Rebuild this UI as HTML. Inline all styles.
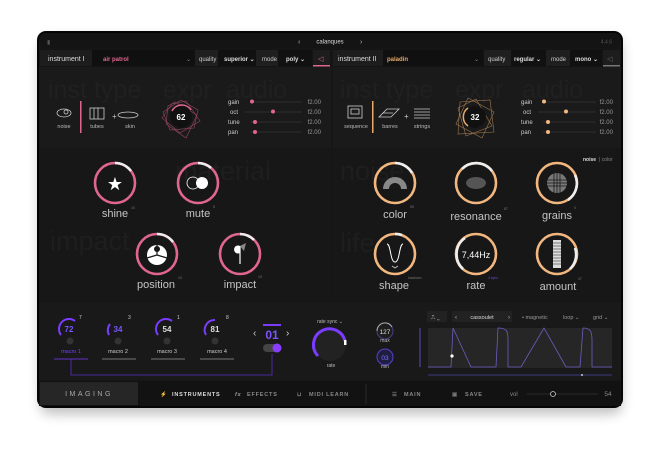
<!DOCTYPE html>
<html><head><meta charset="utf-8"><style>
html,body{margin:0;padding:0;background:#fff;width:660px;height:450px;overflow:hidden}
svg{display:block;font-family:"Liberation Sans",sans-serif}
</style></head><body>
<svg width="660" height="450" viewBox="0 0 660 450" xmlns="http://www.w3.org/2000/svg">
<defs>
<filter id="sh" x="-10%" y="-10%" width="120%" height="130%"><feGaussianBlur stdDeviation="6"/></filter>
</defs>
<rect x="40" y="38" width="582" height="376" rx="10" fill="#000" opacity="0.25" filter="url(#sh)"/>
<rect x="37" y="31" width="586" height="377" rx="9" fill="#050505"/>
<rect x="39" y="33" width="582" height="373" rx="7" fill="#161616"/>
<rect x="39" y="33" width="582" height="15" rx="7" fill="#141414"/>
<text x="47" y="44" font-size="6" fill="#555">▮</text>
<text x="298" y="44" font-size="7" fill="#bbb">‹</text>
<text x="330" y="43.5" font-size="6" fill="#ddd" text-anchor="middle">calanques</text>
<text x="360" y="44" font-size="7" fill="#bbb">›</text>
<text x="612" y="43.5" font-size="5" fill="#555" text-anchor="end">4.4.6</text>
<rect x="39" y="49" width="292" height="18" fill="#141414"/>
<rect x="333" y="49" width="288" height="18" fill="#141414"/>
<rect x="40" y="50" width="52" height="16" fill="#1d1d1d"/>
<text x="48" y="61" font-size="7" fill="#ddd">instrument I</text>
<rect x="92" y="50" width="103" height="16" fill="#101010"/>
<text x="103" y="61" font-size="6" font-weight="bold" fill="#e0668f">air patrol</text>
<text x="186" y="61" font-size="6" fill="#888">⌄</text>
<rect x="195" y="50" width="23" height="16" fill="#1f1f1f"/>
<text x="199" y="61" font-size="6" fill="#ccc">quality</text>
<rect x="218" y="50" width="38" height="16" fill="#111"/>
<text x="224" y="61" font-size="6" font-weight="bold" fill="#ddd">superior ⌄</text>
<rect x="256" y="50" width="22" height="16" fill="#1f1f1f"/>
<text x="262" y="61" font-size="6" fill="#ccc">mode</text>
<rect x="278" y="50" width="34" height="16" fill="#111"/>
<text x="286" y="61" font-size="6" font-weight="bold" fill="#ddd">poly  ⌄</text>
<rect x="313" y="50" width="17" height="16" fill="#1d1d1d"/>
<text x="318" y="61" font-size="7" fill="#e0668f">◁</text>
<rect x="313" y="65" width="17" height="1.5" fill="#e0668f"/>

<rect x="333" y="50" width="50" height="16" fill="#1d1d1d"/>
<text x="338" y="61" font-size="7" fill="#ddd">instrument II</text>
<rect x="383" y="50" width="100" height="16" fill="#101010"/>
<text x="387" y="61" font-size="6" font-weight="bold" fill="#e8a96a">paladin</text>
<text x="474" y="61" font-size="6" fill="#888">⌄</text>
<rect x="484" y="50" width="27" height="16" fill="#1f1f1f"/>
<text x="488" y="61" font-size="6" fill="#ccc">quality</text>
<rect x="511" y="50" width="35" height="16" fill="#111"/>
<text x="514" y="61" font-size="6" font-weight="bold" fill="#ddd">regular ⌄</text>
<rect x="546" y="50" width="24" height="16" fill="#1f1f1f"/>
<text x="551" y="61" font-size="6" fill="#ccc">mode</text>
<rect x="570" y="50" width="32" height="16" fill="#111"/>
<text x="575" y="61" font-size="6" font-weight="bold" fill="#ddd">mono ⌄</text>
<rect x="603" y="50" width="17" height="16" fill="#1d1d1d"/>
<text x="607" y="61" font-size="7" fill="#666">◁</text>
<rect x="603" y="65" width="17" height="1.5" fill="#777"/>

<rect x="39" y="67" width="292" height="81" fill="#1a1a1a"/>
<rect x="333" y="67" width="288" height="81" fill="#1a1a1a"/>
<g font-size="25" fill="#202020">
<text x="48" y="98">inst type</text><text x="163" y="98">expr</text><text x="226" y="98">audio</text>
<text x="340" y="98">inst type</text><text x="455" y="98">expr</text><text x="522" y="98">audio</text>
</g>
<g stroke="#ccc" fill="none" stroke-width="0.8">
<ellipse cx="64" cy="113" rx="7" ry="4"/><circle cx="66" cy="112" r="2"/>
<rect x="90" y="108" width="14" height="11"/><line x1="94" y1="108" x2="94" y2="119"/><line x1="98" y1="108" x2="98" y2="119"/>
<ellipse cx="128" cy="115" rx="10" ry="3"/>
</g>
<rect x="80" y="101" width="1.5" height="32" fill="#e0668f"/>
<text x="112" y="119" font-size="8" fill="#ccc">+</text>
<g font-size="5.5" fill="#bbb" text-anchor="middle"><text x="64" y="128">noise</text><text x="97" y="128">tubes</text><text x="130" y="128">skin</text></g>
<g stroke="#a04a6a" fill="none" stroke-width="0.6" opacity="0.9">
<polygon points="181,100 198,110 194,128 170,130 163,112"/>
<polygon points="175,102 197,115 186,138 166,124 168,106"/>
<polygon points="186,101 200,121 180,133 162,118 172,104"/>
</g>
<circle cx="181" cy="117" r="11" fill="#111"/>
<path d="M172,111 A11,11 0 0 1 191,110" stroke="#e0668f" stroke-width="1.5" fill="none"/>
<text x="181" y="120" font-size="8" font-weight="bold" fill="#fff" text-anchor="middle">62</text>
<g font-size="6" fill="#ccc">
<text x="228" y="104">gain</text><text x="230" y="114">oct</text><text x="228" y="124">tune</text><text x="228" y="134">pan</text>
</g>
<g stroke="#444" stroke-width="0.6">
<line x1="250" y1="102" x2="302" y2="102"/><line x1="245" y1="112" x2="302" y2="112"/><line x1="250" y1="122" x2="302" y2="122"/><line x1="250" y1="132" x2="302" y2="132"/>
</g>
<g fill="#e0668f"><circle cx="252" cy="101.5" r="2"/><circle cx="273" cy="111.5" r="2"/><circle cx="255" cy="122" r="2"/><circle cx="255" cy="132" r="2"/></g>
<g font-size="6" fill="#999" text-anchor="end"><text x="321" y="104">f2.00</text><text x="321" y="114">f2.00</text><text x="321" y="124">f2.00</text><text x="321" y="134">f2.00</text></g>

<g stroke="#ccc" fill="none" stroke-width="0.8">
<rect x="348" y="106" width="14" height="12"/><rect x="351" y="109" width="8" height="5"/>
<path d="M379,117 l8,-8 l12,0 l-8,8 z M383,113 l10,0"/>
<path d="M414,109 h16 M414,112 h16 M414,115 h16 M414,118 h16"/>
</g>
<rect x="372" y="101" width="1.5" height="32" fill="#e8a96a"/>
<text x="404" y="119" font-size="8" fill="#ccc">+</text>
<g font-size="5.5" fill="#bbb" text-anchor="middle"><text x="356" y="128">sequence</text><text x="390" y="128">barres</text><text x="422" y="128">strings</text></g>
<g stroke="#a0774f" fill="none" stroke-width="0.6">
<polygon points="460,102 490,100 494,132 458,134"/>
<polygon points="468,98 494,112 482,138 456,124"/>
<polygon points="476,99 492,126 466,136 458,108"/>
</g>
<circle cx="475" cy="117" r="11" fill="#111"/>
<path d="M468,108 A11,11 0 0 0 468,126" stroke="#e8a96a" stroke-width="1.5" fill="none"/>
<text x="475" y="120" font-size="8" font-weight="bold" fill="#fff" text-anchor="middle">32</text>
<g font-size="6" fill="#ccc">
<text x="521" y="104">gain</text><text x="523" y="114">oct</text><text x="521" y="124">tune</text><text x="521" y="134">pan</text>
</g>
<g stroke="#444" stroke-width="0.6">
<line x1="543" y1="102" x2="596" y2="102"/><line x1="538" y1="112" x2="596" y2="112"/><line x1="543" y1="122" x2="596" y2="122"/><line x1="543" y1="132" x2="596" y2="132"/>
</g>
<g fill="#f1b77f"><circle cx="544" cy="101.5" r="2"/><circle cx="566" cy="111.5" r="2"/><circle cx="548" cy="122" r="2"/><circle cx="548" cy="132" r="2"/></g>
<g font-size="6" fill="#999" text-anchor="end"><text x="613" y="104">f2.00</text><text x="613" y="114">f2.00</text><text x="613" y="124">f2.00</text><text x="613" y="134">f2.00</text></g>

<rect x="39" y="150" width="292" height="150" fill="#171717"/>
<rect x="333" y="150" width="288" height="150" fill="#171717"/>
<g font-size="27" fill="#1e1e1e">
<text x="175" y="180">material</text><text x="50" y="250">impact</text>
<text x="340" y="180">noise</text><text x="340" y="252">life</text>
</g>
<text x="583" y="161" font-size="5" fill="#ddd" font-weight="bold">noise</text><text x="599" y="161" font-size="5" fill="#888">| color</text>

<g fill="none" stroke-width="2.6">
<circle cx="115" cy="183" r="20" stroke="#e0668f"/><path d="M115,163 A20,20 0 0 1 131,171" stroke="#eee"/>
<circle cx="198" cy="183" r="20" stroke="#e0668f"/><path d="M198,163 A20,20 0 0 1 211,168" stroke="#eee"/>
<circle cx="157" cy="254" r="20" stroke="#e0668f"/><path d="M157,234 A20,20 0 0 1 173,242" stroke="#eee"/>
<circle cx="240" cy="254" r="20" stroke="#e0668f"/><path d="M240,234 A20,20 0 0 1 254,240" stroke="#eee"/>
</g>
<text x="115" y="190" font-size="18" fill="#fff" text-anchor="middle">★</text>
<circle cx="193" cy="183" r="6" fill="none" stroke="#fff" stroke-width="0.8"/><circle cx="202" cy="183" r="6" fill="#fff"/>
<circle cx="157" cy="255" r="10" fill="#fff"/><path d="M157,255 L147,258 M157,255 L167,258 M157,255 L157,245" stroke="#171717" stroke-width="1.2"/><circle cx="157" cy="249" r="3" fill="#171717"/>
<path d="M240,246 l0,18" stroke="#fff" stroke-width="1.2"/><path d="M240,246 a4,4 0 1 0 0,7 z" fill="#fff"/><path d="M240,246 l6,-3 l-2,8 z" fill="#888"/>
<g font-size="11" fill="#c4c4c4" text-anchor="middle">
<text x="115" y="217">shine</text><text x="198" y="217">mute</text><text x="156" y="288">position</text><text x="240" y="288">impact</text>
</g>
<g font-size="3.5" fill="#777"><text x="131" y="209">10</text><text x="213" y="208">5</text><text x="178" y="279">10</text><text x="258" y="278">10</text></g>

<g fill="none" stroke-width="2.6">
<circle cx="395" cy="183" r="20" stroke="#f1b77f"/><path d="M395,163 A20,20 0 0 1 412,173" stroke="#eee"/>
<circle cx="476" cy="183" r="20" stroke="#f1b77f"/><path d="M462,169 A20,20 0 0 1 492,171" stroke="#eee"/>
<circle cx="557" cy="183" r="20" stroke="#f1b77f"/><path d="M575,175 A20,20 0 0 1 568,200" stroke="#eee"/>
<circle cx="395" cy="254" r="20" stroke="#f1b77f"/><path d="M395,234 A20,20 0 0 1 402,235" stroke="#eee"/>
<circle cx="476" cy="254" r="20" stroke="#f1b77f"/><path d="M463,269 A20,20 0 0 1 465,238" stroke="#eee"/>
<circle cx="557" cy="254" r="20" stroke="#f1b77f"/><path d="M575,248 A20,20 0 0 1 570,269" stroke="#eee"/>
</g>
<path d="M383,189 A12,12 0 0 1 407,189 L401,189 A6,6 0 0 0 389,189 Z" fill="#888"/>
<ellipse cx="476" cy="183" rx="10" ry="6" fill="#555"/>
<circle cx="557" cy="183" r="10" fill="#bbb" opacity="0.6"/>
<g stroke="#171717" stroke-width="0.8"><path d="M547,180 h20 M547,183 h20 M547,186 h20 M554,173 v20 M557,173 v20 M560,173 v20"/></g>
<path d="M387,244 c4,0 3,18 8,18 c5,0 4,-18 8,-18" stroke="#fff" fill="none" stroke-width="1"/>
<path d="M392,266 l3,2 l3,-2" stroke="#ccc" fill="none" stroke-width="0.8"/>
<text x="476" y="258" font-size="9" fill="#fff" text-anchor="middle">7,44Hz</text>
<rect x="553" y="240" width="8" height="28" fill="#ddd"/><g stroke="#171717" stroke-width="0.6"><path d="M553,243h8M553,246h8M553,249h8M553,252h8M553,255h8M553,258h8M553,261h8M553,264h8"/></g>
<g font-size="11" fill="#c4c4c4" text-anchor="middle">
<text x="395" y="218">color</text><text x="476" y="220">resonance</text><text x="557" y="219">grains</text>
<text x="394" y="289">shape</text><text x="476" y="289">rate</text><text x="558" y="290">amount</text>
</g>
<g font-size="3.5" fill="#777"><text x="410" y="208">50</text><text x="504" y="210">87</text><text x="574" y="209">0</text><text x="408" y="279">lowdown</text><text x="488" y="279" fill="#6a4fd8">4 sync</text><text x="578" y="280">37</text></g>

<rect x="39" y="302" width="582" height="78" fill="#191919"/>
<g fill="none" stroke-width="2">
<path d="M61,335 A10,10 0 0 1 75,321" stroke="#7a3cff"/>
<path d="M109,335 A10,10 0 0 1 110,324" stroke="#7a3cff"/>
<path d="M158,335 A10,10 0 0 1 172,321" stroke="#7a3cff"/>
<path d="M206,335 A10,10 0 0 1 215,320" stroke="#7a3cff"/>
</g>
<g font-size="8" font-weight="bold" text-anchor="middle">
<text x="69" y="332" fill="#7a55ff">72</text><text x="118" y="332" fill="#7a55ff">34</text><text x="167" y="332" fill="#ddd">54</text><text x="215" y="332" fill="#ddd">81</text>
</g>
<g font-size="5" fill="#ccc"><text x="79" y="319">7</text><text x="128" y="319">3</text><text x="177" y="319">1</text><text x="226" y="319">8</text></g>
<g fill="#333"><circle cx="70" cy="341" r="3.5"/><circle cx="118" cy="341" r="3.5"/><circle cx="167" cy="341" r="3.5"/><circle cx="215" cy="341" r="3.5"/></g>
<g font-size="5.5" text-anchor="middle"><text x="71" y="353" fill="#7a3cff">macro 1</text><text x="118" y="353" fill="#ccc">macro 2</text><text x="167" y="353" fill="#ccc">macro 3</text><text x="217" y="353" fill="#ccc">macro 4</text></g>
<g stroke-width="0.8"><line x1="54" y1="359" x2="88" y2="359" stroke="#7a3cff"/><line x1="102" y1="359" x2="136" y2="359" stroke="#999"/><line x1="151" y1="359" x2="185" y2="359" stroke="#999"/><line x1="200" y1="359" x2="234" y2="359" stroke="#999"/></g>
<path d="M71,359 V375 H272 V354" stroke="#5a2fc8" fill="none" stroke-width="0.8"/>
<text x="253" y="336" font-size="10" fill="#ccc">‹</text><text x="286" y="336" font-size="10" fill="#ccc">›</text>
<rect x="263" y="324" width="18" height="2" fill="#7a3cff"/>
<text x="272" y="339" font-size="12" font-weight="bold" fill="#7a55ff" text-anchor="middle">01</text>
<rect x="263" y="344" width="18" height="8" rx="4" fill="#444"/><circle cx="277" cy="348" r="4.5" fill="#8a3cff"/>
<text x="330" y="323" font-size="5" fill="#bbb" text-anchor="middle">rate sync ⌄</text>
<circle cx="330" cy="345" r="16" fill="#222"/>
<path d="M318,356 A16,16 0 1 1 345,341" stroke="#7a3cff" stroke-width="3" fill="none"/>
<rect x="344" y="340" width="2.5" height="5" fill="#fff"/>
<text x="331" y="367" font-size="5" fill="#bbb" text-anchor="middle">rate</text>
<circle cx="385" cy="331" r="8" fill="#1e1e1e" stroke="#4a3f80" stroke-width="1"/><path d="M377,331 A8,8 0 0 1 392,327" stroke="#aaa" fill="none" stroke-width="1"/>
<text x="385" y="334" font-size="6.5" fill="#ddd" text-anchor="middle">127</text><text x="385" y="342" font-size="5" fill="#bbb" text-anchor="middle">max</text>
<circle cx="385" cy="357" r="8" fill="#1e1e40" stroke="#5a3fd0" stroke-width="1"/>
<text x="385" y="360" font-size="6.5" fill="#8a70ff" text-anchor="middle">03</text><text x="385" y="368" font-size="5" fill="#bbb" text-anchor="middle">min</text>
<line x1="420" y1="328" x2="420" y2="367" stroke="#5a4fb0" stroke-width="1"/>
<rect x="427" y="311" width="20" height="11" fill="#222"/><text x="431" y="319" font-size="6" fill="#bbb">⎍ ⌄</text>
<rect x="452" y="311" width="60" height="11" fill="#222"/>
<text x="455" y="319" font-size="6" fill="#bbb">‹</text><text x="482" y="319" font-size="5.5" fill="#ddd" text-anchor="middle">cassoulet</text><text x="508" y="319" font-size="6" fill="#bbb">›</text>
<text x="522" y="319" font-size="5.5" fill="#999">• magnetic</text><text x="563" y="319" font-size="5.5" fill="#999">loop ⌄</text><text x="593" y="319" font-size="5.5" fill="#999">grid ⌄</text>
<rect x="428" y="328" width="184" height="40" fill="#262626"/>
<path d="M428,367 H451 L453,328 L471,367 H496 L498,328 C507,328 508,331 508,340 V367 H521 L544,328 L566,367 H580 L583,328 C590,328 592,331 592,340 V367 H612" stroke="#6a5fc0" fill="none" stroke-width="0.8"/>
<circle cx="452" cy="356" r="1.6" fill="#fff"/>
<line x1="428" y1="375" x2="612" y2="375" stroke="#4a45a0" stroke-width="0.8"/><circle cx="582" cy="375" r="1" fill="#ccc"/>

<rect x="39" y="381" width="582" height="25" fill="#121212"/>
<rect x="40" y="382" width="98" height="23" fill="#262626"/>
<text x="89" y="396" font-size="7" fill="#aaa" text-anchor="middle" letter-spacing="2.5">IMAGING</text>
<g font-size="5.5" font-weight="bold" letter-spacing="0.8">
<text x="160" y="396" fill="#aaa">⚡</text><text x="172" y="396" fill="#ddd">INSTRUMENTS</text>
<text x="235" y="396" fill="#999" font-style="italic">fx</text><text x="247" y="396" fill="#888">EFFECTS</text>
<text x="297" y="396" fill="#888">⊔</text><text x="309" y="396" fill="#888">MIDI LEARN</text>
<text x="392" y="396" fill="#777">☰</text><text x="404" y="396" fill="#888">MAIN</text>
<text x="452" y="396" fill="#777">▣</text><text x="465" y="396" fill="#888">SAVE</text>
</g>
<line x1="366" y1="384" x2="366" y2="404" stroke="#2a2a2a"/>
<text x="510" y="396" font-size="6" fill="#888">vol</text>
<line x1="527" y1="394" x2="598" y2="394" stroke="#444" stroke-width="0.6"/>
<circle cx="553" cy="394" r="2.5" fill="#121212" stroke="#ccc" stroke-width="0.8"/>
<text x="608" y="396" font-size="6.5" fill="#888" text-anchor="middle">54</text>
</svg>
</body></html>
